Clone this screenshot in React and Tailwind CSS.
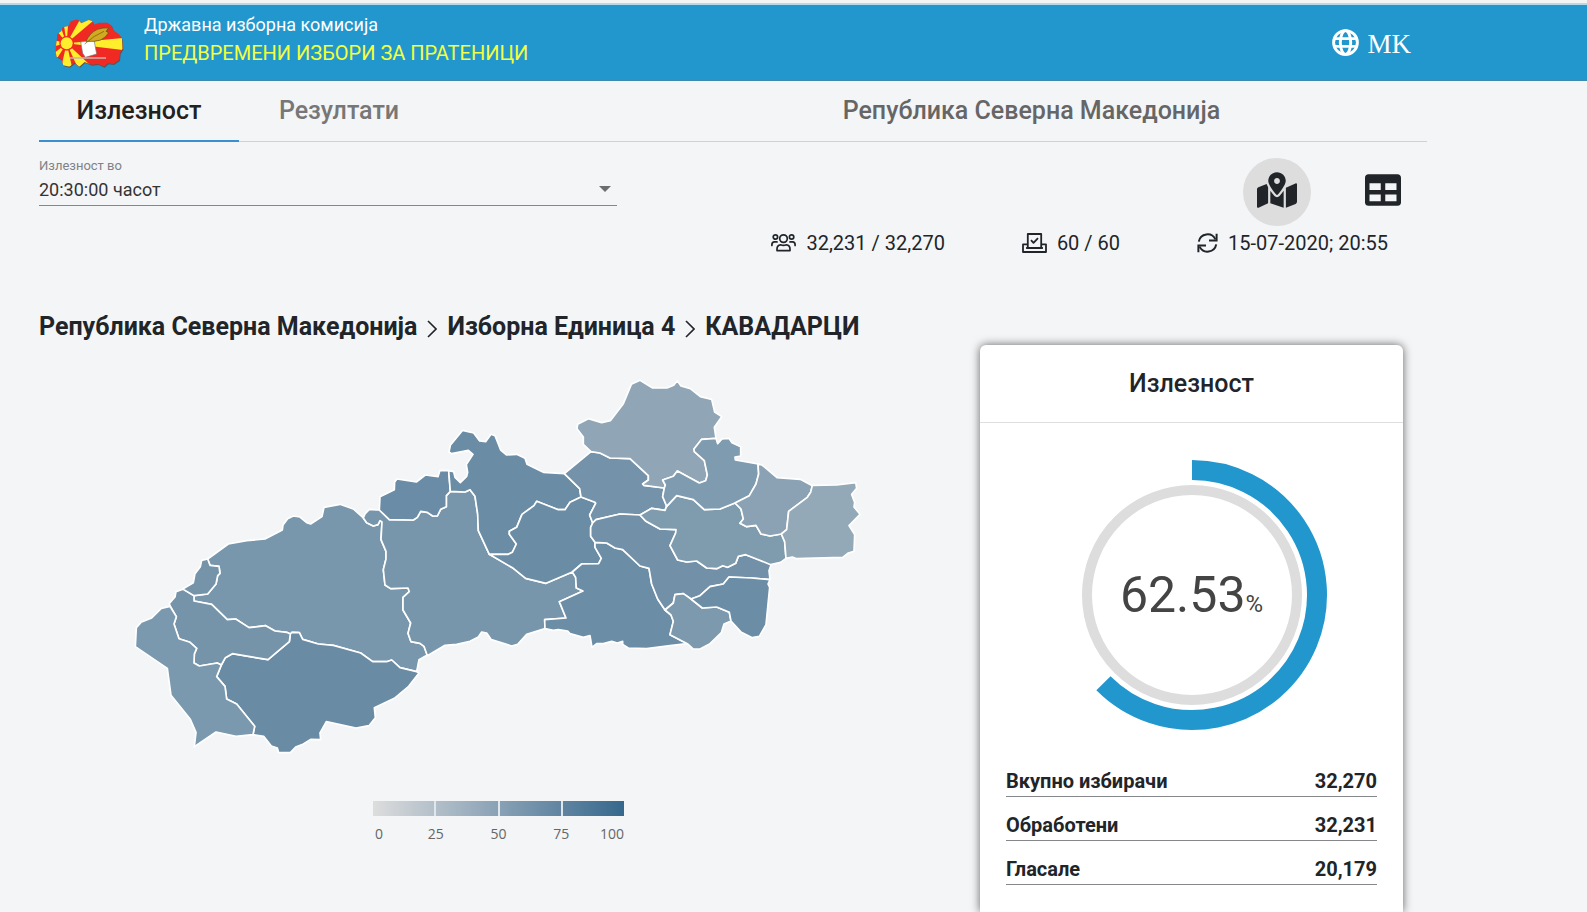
import React, { useState } from 'react';
import { FaMapMarkedAlt, FaTable } from 'react-icons/fa';

const regions = [
  { id: 'a', color: '#7997ac', points: '263,570 325,525 380,515 435,510 487,483 489,468 503,449 520,441 540,444 560,461 572,465 606,443 612,415 660,406 700,420 730,447 740,461 760,471 774,467 780,455 786,459 783,512 798,547 798,570 790,602 795,648 812,659 864,657 868,668 849,685 849,723 872,762 864,793 873,818 900,823 912,832 922,858 897,872 890,908 840,896 815,873 800,878 758,878 722,852 640,829 595,825 548,811 538,791 516,790 511,795 500,790 465,786 437,770 387,776 347,750 322,752 275,706 222,696 222,680 263,675 288,645 293,620 300,613 297,592 270,589' },
  { id: 'b', color: '#698ba4', points: '304,888 316,866 337,854 444,872 508,818 511,795 516,790 538,791 548,811 595,825 640,829 722,852 758,878 800,878 815,873 840,896 890,908 897,912 866,952 823,988 763,1016 766,1046 747,1070 708,1077 619,1058 600,1092 602,1112 572,1111 550,1125 527,1134 511,1151 476,1151 472,1137 454,1131 431,1102 399,1097 404,1072 350,1005 320,990 315,952 290,923' },
  { id: 'c', color: '#7896ab', points: '730,447 735,435 748,421 770,423 778,423 808,452 880,453 892,445 902,427 922,430 938,441 952,441 962,421 979,413 979,380 991,367 1035,369 1050,362 1065,382 1073,435 1075,485 1108,556 1180,598 1217,628 1278,643 1357,609 1367,625 1369,657 1389,666 1318,698 1338,747 1274,752 1275,779 1220,796 1193,826 1175,831 1114,812 1100,792 1085,789 1075,804 1050,817 1010,826 975,829 922,860 912,832 900,823 873,818 864,793 872,762 849,723 849,685 868,668 864,657 812,659 795,648 790,602 798,570 798,547 783,512 786,459 780,455 774,467 760,471 740,461' },
  { id: 'd', color: '#7594aa', points: '191,660 222,680 222,696 275,706 322,752 347,750 387,776 437,770 465,786 500,790 511,795 508,818 444,872 337,854 316,866 304,888 292,882 238,891 222,882 223,855 230,838 210,820 177,809 162,765 169,743 150,710 148,703 165,684 168,668' },
  { id: 'e', color: '#7594aa', points: '188,660 220,641 225,614 241,593 245,574 263,570 270,589 297,592 300,613 293,620 288,645 263,675 222,680' },
  { id: 'g', color: '#7b99ae', points: '150,712 124,718 95,747 63,760 49,776 46,833 142,898 153,979 211,1051 228,1090 223,1133 288,1089 348,1102 399,1097 404,1072 350,1005 320,990 315,952 290,923 304,888 292,882 238,891 222,882 223,855 230,838 210,820 177,809 162,765 169,743' },
  { id: 'h', color: '#6b8ca6', points: '778,423 780,383 823,362 824,339 831,330 889,339 916,318 954,323 960,304 986,305 991,367 979,380 979,413 962,421 952,441 938,441 922,430 902,427 892,445 880,453 808,452' },
  { id: 'i', color: '#6a8ca5', points: '986,305 1001,308 1005,325 1021,341 1040,322 1043,310 1039,287 1059,256 1045,244 995,254 987,249 991,229 1028,184 1061,192 1079,216 1097,218 1113,196 1125,200 1142,243 1160,258 1190,256 1215,268 1221,286 1270,310 1333,314 1379,359 1383,384 1350,400 1335,422 1315,422 1250,397 1242,410 1206,436 1190,475 1168,487 1168,496 1189,525 1177,550 1165,556 1108,556 1075,485 1073,435 1065,382 1050,362 1035,369 991,367' },
  { id: 'j', color: '#6a8ca5', points: '1108,556 1165,556 1177,550 1189,525 1168,496 1168,487 1190,475 1206,436 1242,410 1250,397 1315,422 1335,422 1350,400 1383,384 1425,400 1427,403 1409,438 1418,462 1412,475 1412,502 1425,520 1425,535 1444,568 1436,584 1385,585 1357,609 1278,643 1217,628 1180,598' },
  { id: 'k', color: '#7493aa', points: '1333,314 1413,248 1440,252 1470,267 1530,269 1585,320 1585,333 1568,345 1572,349 1633,357 1628,383 1640,410 1635,424 1595,418 1560,438 1500,435 1428,452 1418,462 1409,438 1427,403 1425,400 1383,384 1379,359' },
  { id: 'l', color: '#6b8da6', points: '1425,520 1460,522 1485,537 1508,542 1560,591 1587,598 1595,645 1613,690 1635,723 1653,738 1660,757 1650,797 1702,824 1650,830 1580,839 1525,837 1508,826 1508,817 1492,822 1475,817 1450,824 1430,824 1416,835 1410,800 1390,805 1350,794 1343,786 1315,782 1300,784 1275,779 1274,752 1338,747 1318,698 1389,666 1369,657 1367,625 1357,609 1385,585 1436,584 1444,568 1425,535' },
  { id: 'm', color: '#7291a9', points: '1418,462 1428,452 1500,435 1560,438 1578,457 1620,480 1668,482 1667,492 1650,530 1673,573 1700,579 1730,576 1760,597 1790,599 1808,590 1823,595 1847,583 1855,562 1877,557 1954,585 1947,605 1950,632 1895,627 1827,624 1810,645 1770,653 1740,680 1713,690 1690,674 1665,677 1660,702 1635,723 1613,690 1595,645 1587,598 1560,591 1508,542 1485,537 1460,522 1425,520 1412,502 1412,475' },
  { id: 'n', color: '#7c99ae', points: '1635,723 1660,702 1665,677 1690,674 1713,690 1747,717 1790,714 1828,730 1833,756 1812,765 1804,791 1770,824 1740,840 1720,840 1702,824 1650,797 1660,757 1653,738' },
  { id: 'o', color: '#7f9bae', points: '1560,438 1595,418 1635,424 1640,412 1670,380 1720,392 1753,422 1800,420 1845,402 1863,420 1870,450 1860,463 1880,473 1908,469 1923,495 1950,501 1984,495 1994,518 1998,568 1982,580 1952,587 1877,557 1855,562 1847,583 1823,595 1808,590 1790,599 1760,597 1730,576 1700,579 1673,573 1650,530 1667,492 1668,482 1620,480 1578,457' },
  { id: 'p', color: '#6c8da6', points: '1950,632 1944,645 1949,655 1938,767 1918,802 1897,806 1864,790 1833,756 1828,730 1790,714 1747,717 1713,690 1740,680 1770,653 1810,645 1827,624 1895,627' },
  { id: 'q', color: '#90a6b6', points: '1413,248 1390,226 1390,204 1371,179 1373,166 1405,149 1445,161 1471,155 1510,104 1534,46 1560,34 1598,57 1641,57 1661,49 1672,35 1683,51 1711,59 1741,83 1775,91 1784,129 1805,143 1783,175 1788,208 1745,211 1722,240 1723,248 1753,275 1762,318 1757,335 1738,342 1672,306 1660,322 1628,333 1636,348 1633,357 1572,349 1568,345 1585,333 1585,320 1530,269 1470,267 1440,252' },
  { id: 'r', color: '#7f9bb0', points: '1788,208 1793,224 1806,210 1827,208 1836,221 1862,233 1862,261 1845,264 1846,273 1914,285 1916,315 1908,345 1888,380 1845,402 1800,420 1753,422 1720,392 1670,380 1640,412 1628,383 1633,357 1636,348 1628,333 1660,322 1672,306 1738,342 1757,335 1762,318 1753,275 1723,248 1722,240 1745,211' },
  { id: 's', color: '#8aa2b4', points: '1914,285 1926,288 1971,326 2041,331 2077,350 2072,370 2062,385 2006,427 2000,482 1984,495 1950,501 1923,495 1908,469 1880,473 1860,463 1870,450 1863,420 1845,402 1888,380 1908,345 1916,315' },
  { id: 't', color: '#94a9b8', points: '2077,349 2150,348 2207,341 2210,358 2195,376 2204,400 2202,414 2220,436 2187,470 2204,497 2202,547 2185,552 2168,565 2030,569 2017,564 1998,568 1994,518 1984,495 2000,482 2006,427 2062,385 2072,370' }
];

const totals = [
  { label: 'Вкупно избирачи', value: '32,270' },
  { label: 'Обработени', value: '32,231' },
  { label: 'Гласале', value: '20,179' }
];

const countryPath = 'M8 68 L10 48 L22 40 L26 28 L44 24 L50 10 L70 4 L82 16 L104 6 L116 10 L118 20 L136 14 L160 14 L172 22 L178 36 L196 50 L204 62 L206 92 L198 106 L196 126 L178 138 L162 136 L150 146 L132 138 L112 140 L92 132 L76 146 L62 134 L46 146 L28 142 L22 124 L8 116 L4 98 Z';

const Logo = () => (
  <svg viewBox="0 0 210 150" className="h-[50px] w-[70px]" aria-hidden="true">
    <defs>
      <clipPath id="country">
        <path d={countryPath} />
      </clipPath>
    </defs>
    <path d={countryPath} fill="#555" transform="translate(2 3)" />
    <g clipPath="url(#country)">
      <rect width="210" height="150" fill="#f02a22" />
      <g fill="#ffee2c">
        <path d="M38 76 L210 60 L210 96 Z" />
        <path d="M38 76 L84 -6 L132 -4 Z" />
        <path d="M38 76 L76 160 L124 156 Z" />
        <path d="M38 76 L26 -4 L44 -4 Z" />
        <path d="M38 76 L20 156 L56 156 Z" />
        <path d="M38 76 L-4 66 L-4 86 Z" />
        <path d="M38 76 L-10 14 L12 6 Z" />
        <path d="M38 76 L-8 112 L2 132 Z" />
      </g>
      <circle cx="38" cy="76" r="22" fill="#f02a22" />
      <circle cx="38" cy="76" r="18" fill="#ffee2c" />
    </g>
    <path d="M80 72 L120 66 L128 108 L94 118 L86 106 Z" fill="#fff" stroke="#777" strokeWidth="2" />
    <path d="M96 70 Q106 46 130 34 Q150 28 164 30 L156 40 L164 44 Q156 58 140 66 Q122 72 96 70 Z" fill="#d2a91f" stroke="#5f4a16" strokeWidth="2" />
    <path d="M92 78 Q120 52 150 40" fill="none" stroke="#6d5518" strokeWidth="2" />
    <path d="M48 120 H156" stroke="#c9b3b3" strokeWidth="4" />
  </svg>
);

const GlobeIcon = () => (
  <svg viewBox="0 0 27 27" className="size-[27px]" fill="none" stroke="currentColor" strokeWidth="2.9" aria-hidden="true">
    <circle cx="13.5" cy="13.5" r="11.9" />
    <ellipse cx="13.5" cy="13.5" rx="5.2" ry="11.9" />
    <path d="M2 9.6 H25 M2 17.4 H25" />
  </svg>
);

const UsersIcon = () => (
  <svg viewBox="0 0 25 20" className="h-5 w-[25px]" fill="none" stroke="currentColor" strokeWidth="1.7" strokeLinecap="round" aria-hidden="true">
    <circle cx="4.4" cy="4" r="2.2" />
    <circle cx="20.6" cy="4" r="2.2" />
    <circle cx="12.5" cy="5.6" r="3.8" />
    <path d="M6 17.6 V16 Q6 12 9.6 11.8 Q12.5 13 15.4 11.8 Q19 12 19 16 V17.6 Z" strokeLinejoin="round" />
    <path d="M0.9 12.4 V11.6 Q1 9 3.4 8.9 H6 M24.1 12.4 V11.6 Q24 9 21.6 8.9 H19" />
  </svg>
);

const BallotIcon = () => (
  <svg viewBox="0 0 25 20" className="h-5 w-[25px]" fill="none" stroke="currentColor" strokeWidth="1.8" strokeLinejoin="round" aria-hidden="true">
    <path d="M5.8 15 V1 H19.2 V15 Z" />
    <path d="M5.8 11.4 H1 V19 H24 V11.4 H19.2" />
    <path d="M4 15 H21" />
    <path d="M9 7.2 L11.5 9.8 L16 5.2" />
  </svg>
);

const SyncIcon = () => (
  <svg viewBox="0 0 21 20" className="h-5 w-[21px]" fill="none" stroke="currentColor" strokeWidth="2" aria-hidden="true">
    <path d="M1.8 8.6 A8.8 8.8 0 0 1 18.4 6.4" />
    <path d="M19.6 0.8 V7.4 H12" />
    <path d="M19.2 11.4 A8.8 8.8 0 0 1 2.6 13.6" />
    <path d="M1.4 19.2 V12.6 H9" />
  </svg>
);

const Chevron = () => (
  <svg viewBox="0 0 10 18" className="mx-[10px] mt-1 h-[18px] w-[10px]" fill="none" stroke="currentColor" strokeWidth="1.6" aria-hidden="true">
    <path d="M1 1 L9 9 L1 17" />
  </svg>
);

const Gauge = ({ value }) => {
  const angle = (value / 100) * 2 * Math.PI;
  const r = 125;
  const x = 136 + r * Math.sin(angle);
  const y = 136 - r * Math.cos(angle);

  return (
    <div className="relative">
      <svg viewBox="0 0 272 272" className="size-[272px]" fill="none" aria-hidden="true">
        <circle cx="136" cy="136" r="105" stroke="#dddddd" strokeWidth="10" />
        <path d={`M136 11 A${r} ${r} 0 1 1 ${x} ${y}`} stroke="#2297ce" strokeWidth="20" />
      </svg>
      <div className="absolute inset-0 flex items-center justify-center text-[#444]">
        <span className="text-[50px] leading-none">{value}<span className="text-2xl leading-none">%</span></span>
      </div>
    </div>
  );
};

const App = () => {
  const [tab, setTab] = useState('turnout');
  const [view, setView] = useState('map');

  return (
    <div className="flex min-h-screen flex-col border-t-[3px] border-[#f4f4f4] bg-[#f3f5f7] font-[Roboto,sans-serif] text-[#212529]">
      <header className="flex h-[78px] items-center border-t-2 border-b border-t-[#b5d9ea] border-b-[#3f88ae] bg-[#2297ce] pr-44 pl-[54px]">
        <Logo />
        <div className="mb-2 ml-5 flex flex-col">
          <span className="text-lg leading-7 text-white">Државна изборна комисија</span>
          <span className="text-xl leading-7 text-[#f4ff3d]">ПРЕДВРЕМЕНИ ИЗБОРИ ЗА ПРАТЕНИЦИ</span>
        </div>
        <button className="ml-auto flex items-center gap-2 font-['Liberation_Serif',serif] text-[27px] text-white">
          <GlobeIcon />
          <span className="pt-1">MK</span>
        </button>
      </header>

      <main className="mr-40 ml-[39px] flex flex-1 flex-col">
        <nav className="flex h-[61px] border-b border-[#cfd1d3] text-[25px] font-medium">
          <button
            onClick={() => setTab('turnout')}
            className={`-mb-px w-[200px] border-b-2 pt-px ${tab === 'turnout' ? 'border-[#3a8fd0] text-[#212121]' : 'border-transparent text-[#777]'}`}
          >
            Излезност
          </button>
          <button
            onClick={() => setTab('results')}
            className={`-mb-px w-[200px] border-b-2 pt-px ${tab === 'results' ? 'border-[#3a8fd0] text-[#212121]' : 'border-transparent text-[#777]'}`}
          >
            Резултати
          </button>
          <button className="ml-auto w-[57%] text-[#666]">Република Северна Македонија</button>
        </nav>

        <section className="flex items-start justify-between">
          <div className="mt-4 w-5/12">
            <label htmlFor="time" className="block text-[13px] leading-4 text-[#808285]">Излезност во</label>
            <div className="relative border-b border-[#85878a]">
              <select id="time" className="block h-[31px] w-full appearance-none text-lg leading-[31px] text-[#333]">
                <option>20:30:00 часот</option>
              </select>
              <span className="pointer-events-none absolute top-3 right-[6px] border-x-6 border-t-6 border-x-transparent border-t-[#6b6d6f]" />
            </div>
          </div>

          <div className="flex flex-col items-end">
            <div className="mt-4 mr-[10px] flex gap-[38px]">
              <button
                aria-label="Мапа"
                onClick={() => setView('map')}
                className={`flex size-[68px] items-center justify-center rounded-full pb-1 ${view === 'map' ? 'bg-[#dddddd]' : ''}`}
              >
                <FaMapMarkedAlt className="h-9 w-10" />
              </button>
              <button
                aria-label="Табела"
                onClick={() => setView('table')}
                className={`flex size-[68px] items-center justify-center rounded-full pb-1 ${view === 'table' ? 'bg-[#dddddd]' : ''}`}
              >
                <FaTable className="size-9" />
              </button>
            </div>
            <div className="mt-[3px] mr-[39px] flex gap-[77px] text-xl">
              <div className="flex items-center gap-[10px]"><UsersIcon />32,231 / 32,270</div>
              <div className="flex items-center gap-[10px]"><BallotIcon />60 / 60</div>
              <div className="flex items-center gap-[10px]"><SyncIcon />15-07-2020; 20:55</div>
            </div>
          </div>
        </section>

        <section className="flex flex-1 justify-between">
          <div className="mt-[54px]">
            <div className="flex items-center text-[25px] leading-8 font-bold">
              <span>Република Северна Македонија</span>
              <Chevron />
              <span>Изборна Единица 4</span>
              <Chevron />
              <span>КАВАДАРЦИ</span>
            </div>

            <svg viewBox="0 0 2250 1170" className="mt-[26px] ml-[81px] h-[390px] w-[750px]" stroke="#fff" strokeWidth="5" strokeLinejoin="round">
              {regions.map(region => (
                <polygon key={region.id} points={region.points} fill={region.color} />
              ))}
            </svg>

            <div className="mt-[42px] ml-[334px] w-[251px]">
              <div className="flex h-[15px] divide-x-2 divide-[#dfe6ec] bg-linear-to-r from-[#dddddd] to-[#36688d]">
                <span className="flex-1" />
                <span className="flex-1" />
                <span className="flex-1" />
                <span className="flex-1" />
              </div>
              <div className="mt-2 flex font-['Open_Sans',sans-serif] text-sm text-[#666]">
                <span className="w-1/8 pl-[2px]">0</span>
                <span className="w-1/4 text-center">25</span>
                <span className="w-1/4 text-center">50</span>
                <span className="w-1/4 text-center">75</span>
                <span className="w-1/8 text-right">100</span>
              </div>
            </div>
          </div>

          <aside className="mt-[88px] mr-6 w-[423px] rounded-t-md bg-white shadow-[0_0_10px_rgba(0,0,0,0.6)]">
            <h2 className="border-b border-[#dfdfdf] text-center text-[25px] leading-[77px] font-medium">Излезност</h2>
            <div className="mt-9 flex justify-center">
              <Gauge value={62.53} />
            </div>
            <table className="mx-auto mt-[21px] w-[371px] text-xl font-bold">
              <tbody>
                {totals.map(row => (
                  <tr key={row.label} className="h-11 border-b border-[#85878a]">
                    <th scope="row" className="pb-px text-left align-bottom">{row.label}</th>
                    <td className="pb-px text-right align-bottom">{row.value}</td>
                  </tr>
                ))}
              </tbody>
            </table>
          </aside>
        </section>
      </main>
    </div>
  );
};

export default App;
